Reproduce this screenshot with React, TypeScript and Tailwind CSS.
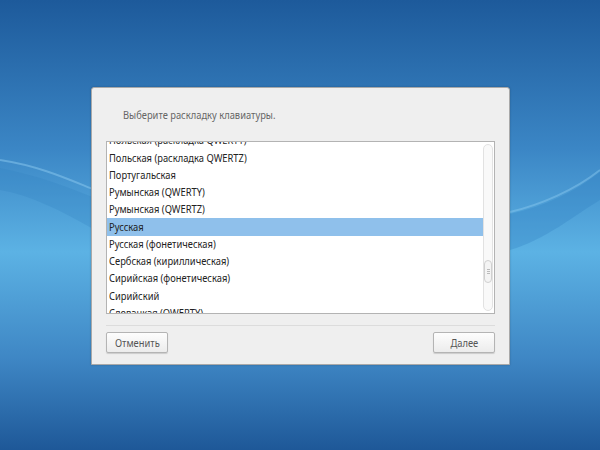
import React from 'react';

const layouts = [
  'Польская (раскладка QWERTY)',
  'Польская (раскладка QWERTZ)',
  'Португальская',
  'Румынская (QWERTY)',
  'Румынская (QWERTZ)',
  'Русская',
  'Русская (фонетическая)',
  'Сербская (кириллическая)',
  'Сирийская (фонетическая)',
  'Сирийский',
  'Словацкая (QWERTY)',
];

const Wallpaper = () => (
  <svg className="absolute inset-0 w-full h-full" viewBox="0 0 600 450" preserveAspectRatio="none">
    <defs>
      <linearGradient id="bg" x1="0" y1="0" x2="0" y2="1">
        <stop offset="0" stopColor="#1d5a9b" />
        <stop offset="0.33" stopColor="#3b86c5" />
        <stop offset="0.56" stopColor="#5cb2e4" />
        <stop offset="0.8" stopColor="#3e86c4" />
        <stop offset="1" stopColor="#1e5898" />
      </linearGradient>
    </defs>
    <rect width="600" height="450" fill="url(#bg)" />
    <path d="M0 160 C40 166 70 180 95 190" stroke="#8ccaf0" strokeOpacity="0.5" strokeWidth="2" fill="none" />
    <path d="M0 168 C40 176 70 188 95 198 L95 230 C60 210 30 195 0 190 Z" fill="#2f7fc0" fillOpacity="0.25" />
    <path d="M510 212 C540 205 575 190 600 170" stroke="#8ccaf0" strokeOpacity="0.45" strokeWidth="2" fill="none" />
    <path d="M510 214 C545 206 575 192 600 172 L600 200 C575 215 545 240 510 250 Z" fill="#2f7fc0" fillOpacity="0.3" />
  </svg>
);

// the screenshot's font is narrower than Noto Sans, so squeeze it a little
const Narrow = ({ children, origin = 'origin-left' }: { children: React.ReactNode; origin?: string }) => (
  <span className={`inline-block scale-x-[0.85] ${origin}`}>{children}</span>
);

const Button = ({ label }: { label: string }) => (
  <button className="w-[62px] h-[21px] rounded-[2px] border border-[#b4b4b4] bg-gradient-to-b from-[#fdfdfd] to-[#ececec] shadow-[0_1px_1px_rgba(0,0,0,0.15)] text-[11px] text-[#555] leading-none">
    <Narrow origin="origin-center">{label}</Narrow>
  </button>
);

export default function App() {
  return (
    <div className="relative w-[600px] h-[450px] overflow-hidden font-['Noto_Sans',sans-serif]">
      <Wallpaper />
      <div className="relative pt-[87px] pl-[91px]">
        <div className="w-[419px] h-[278px] bg-[#efefef] border border-[#a9a9a9] rounded-tl-[3px] rounded-tr-[3px] shadow-[0_0_2px_rgba(0,0,0,0.25)] flex flex-col px-[14px]">
          <div className="h-[53px] pt-[19px] pl-[17px] text-[11px] text-[#666]">
            <Narrow>Выберите раскладку клавиатуры.</Narrow>
          </div>
          <div className="h-[173px] border border-[#b3b3b3] bg-white flex overflow-hidden">
            <div className="flex-1 overflow-hidden">
              <div className="-mt-[10px]">
                {layouts.map((name) => (
                  <div
                    key={name}
                    className={`h-[17.25px] flex items-center pl-[2px] text-[11px] text-[#222] whitespace-nowrap ${name === 'Русская' ? 'bg-[#8fc0eb]' : ''}`}
                  >
                    <Narrow>{name}</Narrow>
                  </div>
                ))}
              </div>
            </div>
            <div className="w-[11px] py-[2px] pr-[1px]">
              <div className="h-full rounded-[5px] border border-[#e2e2e2] bg-[#f9f9f9] flex flex-col pt-[115px]">
                <div className="h-[23px] rounded-[5px] border border-[#d0d0d0] bg-[#f4f4f4] flex flex-col items-center justify-center gap-[1px]">
                  <span className="w-[3px] h-px bg-[#bbb]" />
                  <span className="w-[3px] h-px bg-[#bbb]" />
                  <span className="w-[3px] h-px bg-[#bbb]" />
                </div>
              </div>
            </div>
          </div>
          <div className="mt-[11px] h-px bg-[#dcdcdc]" />
          <div className="mt-[6px] flex justify-between">
            <Button label="Отменить" />
            <Button label="Далее" />
          </div>
        </div>
      </div>
    </div>
  );
}
